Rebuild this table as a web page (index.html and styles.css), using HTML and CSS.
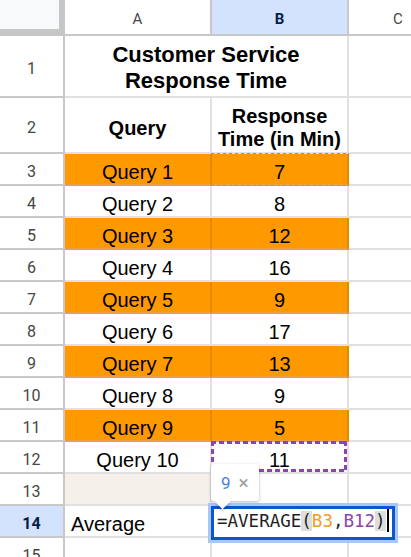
FILE: index.html
```html
<!DOCTYPE html>
<html>
<head>
<meta charset="utf-8">
<link rel="stylesheet" href="styles.css">
</head>
<body>
<div class="sheet">
  <div class="corner"></div>
  <div class="colhead">A</div>
  <div class="colhead sel">B</div>
  <div class="colhead">C</div>

  <div class="rowhead">1</div>
  <div class="cell title"><span>Customer Service<br>Response Time</span></div>
  <div class="cell"></div>

  <div class="rowhead">2</div>
  <div class="cell hdr mid"><span>Query</span></div>
  <div class="cell hdr"><span>Response<br>Time (in Min)</span></div>
  <div class="cell"></div>

  <div class="rowhead">3</div>
  <div class="cell hl">Query 1</div>
  <div class="cell hl rng-orange">7</div>
  <div class="cell"></div>

  <div class="rowhead">4</div>
  <div class="cell">Query 2</div>
  <div class="cell">8</div>
  <div class="cell"></div>

  <div class="rowhead">5</div>
  <div class="cell hl">Query 3</div>
  <div class="cell hl">12</div>
  <div class="cell"></div>

  <div class="rowhead">6</div>
  <div class="cell">Query 4</div>
  <div class="cell">16</div>
  <div class="cell"></div>

  <div class="rowhead">7</div>
  <div class="cell hl">Query 5</div>
  <div class="cell hl">9</div>
  <div class="cell"></div>

  <div class="rowhead">8</div>
  <div class="cell">Query 6</div>
  <div class="cell">17</div>
  <div class="cell"></div>

  <div class="rowhead">9</div>
  <div class="cell hl">Query 7</div>
  <div class="cell hl">13</div>
  <div class="cell"></div>

  <div class="rowhead">10</div>
  <div class="cell">Query 8</div>
  <div class="cell">9</div>
  <div class="cell"></div>

  <div class="rowhead">11</div>
  <div class="cell hl">Query 9</div>
  <div class="cell hl">5</div>
  <div class="cell"></div>

  <div class="rowhead">12</div>
  <div class="cell">Query 10</div>
  <div class="cell rng-purple">11</div>
  <div class="cell"></div>

  <div class="rowhead">13</div>
  <div class="cell beige"></div>
  <div class="cell"></div>
  <div class="cell"></div>

  <div class="rowhead sel">14</div>
  <div class="cell left">Average</div>
  <div class="cell edit">
    <div class="tip"><span class="tip-val">9</span><span class="tip-x">×</span></div>
    <div class="editor">
      <div class="editor-inner">=AVERAGE<span class="paren">(</span><span class="ref-o">B3</span>,<span class="ref-p">B12</span><span class="paren">)</span><span class="caret"></span></div>
    </div>
  </div>
  <div class="cell"></div>

  <div class="rowhead">15</div>
  <div class="cell"></div>
  <div class="cell"></div>
  <div class="cell"></div>
</div>
</body>
</html>
```

FILE: styles.css
```css
body {
  margin: 0;
  overflow: hidden;
  background: #fff;
  font-family: "Liberation Sans", Arial, sans-serif;
}

.sheet {
  display: grid;
  grid-template-columns: 65px 147px 137px 100px;
  grid-template-rows: 36px 62px 56px repeat(13, 32px);
  width: 449px;
}

.sheet > div {
  box-sizing: border-box;
  border-right: 2px solid #e1e1e1;
  border-bottom: 2px solid #e1e1e1;
  display: flex;
  justify-content: center;
  align-items: flex-end;
  font-size: 20px;
  line-height: 23px;
  color: #000;
}

.sheet > .corner {
  background: #f8f9fa;
  border-right: 6px solid #c4c7c5;
  border-bottom: 7px solid #c4c7c5;
}

.sheet > .colhead {
  font-family: Roboto, "Liberation Sans", sans-serif;
  font-size: 15px;
  line-height: 18px;
  color: #444746;
  align-items: center;
  padding-top: 4px;
  border-color: #c8c8c8;
}

.sheet > .rowhead {
  font-family: Roboto, "Liberation Sans", sans-serif;
  font-size: 16px;
  line-height: 19px;
  color: #444746;
  align-items: center;
  padding-top: 4px;
  border-color: #c8c8c8;
}

.sheet > .sel {
  background: #d3e3fd;
  color: #041e49;
  font-weight: bold;
}

.sheet > .title {
  grid-column: span 2;
  text-align: center;
  font-weight: bold;
  font-size: 22px;
  line-height: 26px;
  padding-bottom: 2px;
}

.sheet > .hdr {
  text-align: center;
  font-weight: bold;
  padding-bottom: 1px;
}

.sheet > .mid {
  align-items: center;
  padding-top: 6px;
  padding-bottom: 0;
}

.sheet > .hl {
  background: #ff9900;
  border-right-color: #e58a00;
  border-bottom-color: #e8a040;
}

.sheet > .beige {
  background: #f5f1ea;
}

.sheet > .left {
  justify-content: flex-start;
  padding-left: 6px;
}

.rng-orange,
.rng-purple,
.edit {
  position: relative;
}

.rng-orange::after {
  content: "";
  position: absolute;
  top: -1px;
  left: -1px;
  right: -2px;
  bottom: -2px;
  --c: #e0870a;
  background:
    repeating-linear-gradient(90deg, var(--c) 0 3px, transparent 3px 6px) top left / 100% 1px no-repeat,
    repeating-linear-gradient(90deg, var(--c) 0 3px, transparent 3px 6px) bottom left / 100% 1px no-repeat,
    repeating-linear-gradient(180deg, var(--c) 0 3px, transparent 3px 6px) top left / 1px 100% no-repeat,
    repeating-linear-gradient(180deg, var(--c) 0 3px, transparent 3px 6px) top right / 1px 100% no-repeat;
}

.rng-purple::after {
  content: "";
  position: absolute;
  top: -1px;
  left: -1px;
  right: 0;
  bottom: 0;
  --c: #8e44ad;
  background:
    repeating-linear-gradient(90deg, var(--c) 0 5px, transparent 5px 8px) top left / 100% 3px no-repeat,
    repeating-linear-gradient(90deg, var(--c) 0 5px, transparent 5px 8px) bottom left / 100% 3px no-repeat,
    repeating-linear-gradient(180deg, var(--c) 0 5px, transparent 5px 8px) top left / 3px 100% no-repeat,
    repeating-linear-gradient(180deg, var(--c) 0 5px, transparent 5px 8px) top right / 3px 100% no-repeat;
}

.editor {
  position: absolute;
  left: -4px;
  top: -3px;
  width: 190px;
  height: 40px;
  box-sizing: border-box;
  border: 3px solid #a8c7fa;
  z-index: 2;
}

.editor-inner {
  height: 100%;
  box-sizing: border-box;
  border: 3px solid #0b57d0;
  background: #fff;
  padding-left: 3px;
  font-family: "DejaVu Sans Mono", "Liberation Mono", monospace;
  font-size: 17.5px;
  line-height: 24px;
  white-space: nowrap;
  color: #1f1f1f;
}

.paren {
  background: #dedede;
}

.ref-o {
  color: #f29c1f;
}

.ref-p {
  color: #8e44ad;
}

.caret {
  display: inline-block;
  width: 0;
  height: 23px;
  border-left: 2px solid #000;
  vertical-align: -5px;
  margin-left: 1px;
}

.tip {
  position: absolute;
  left: -1px;
  top: -42px;
  width: 48px;
  height: 37px;
  box-sizing: border-box;
  background: #fff;
  border-radius: 2px;
  box-shadow: 0 1px 3px rgba(0, 0, 0, 0.3);
  display: flex;
  align-items: center;
  gap: 8px;
  padding-left: 10px;
  font-family: Roboto, "Liberation Sans", sans-serif;
  font-size: 17px;
  line-height: 20px;
  z-index: 3;
}

.tip::after {
  content: "";
  position: absolute;
  left: 6px;
  bottom: -6px;
  width: 11px;
  height: 11px;
  background: #fff;
  transform: rotate(45deg);
  box-shadow: 2px 2px 2px rgba(0, 0, 0, 0.15);
}

.tip-val {
  color: #4a7fe0;
}

.tip-x {
  color: #a0a0a0;
  font-size: 19px;
}
```
